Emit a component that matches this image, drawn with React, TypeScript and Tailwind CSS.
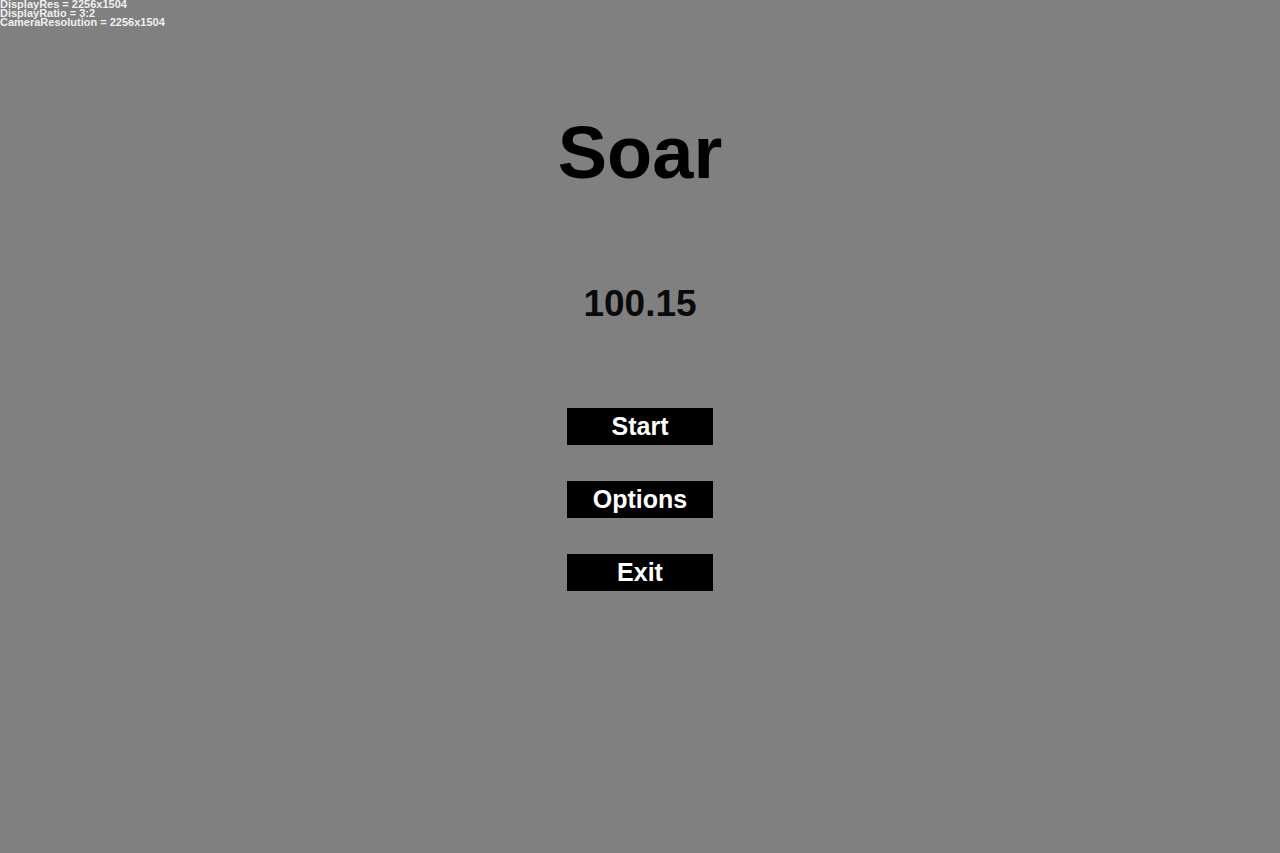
import React from "react";

const stats = [
  "DisplayRes = 2256x1504",
  "DisplayRatio = 3:2",
  "CameraResolution = 2256x1504",
];

const menu = ["Start", "Options", "Exit"];

export default function App() {
  return (
    <div className="relative min-h-screen w-full bg-[#808080] font-['Liberation_Sans',Arial,sans-serif]">
      {/* debug overlay */}
      <div className="absolute left-0 top-0 text-[11px] font-bold leading-[9px] text-[#f0f0f0]">
        {stats.map((s) => (
          <div key={s}>{s}</div>
        ))}
      </div>

      <div className="flex flex-col items-center">
        <h1 className="mt-[116px] text-[74px] font-bold leading-none text-black">Soar</h1>
        <div className="mt-[95px] text-[37px] font-bold leading-none text-[#0a0a0a]">100.15</div>

        <div className="mt-[86px] flex flex-col gap-[36px]">
          {menu.map((m) => (
            <button
              key={m}
              className="flex h-[37px] w-[146px] items-center justify-center bg-black text-[25px] font-bold text-white"
            >
              {m}
            </button>
          ))}
        </div>
      </div>
    </div>
  );
}
